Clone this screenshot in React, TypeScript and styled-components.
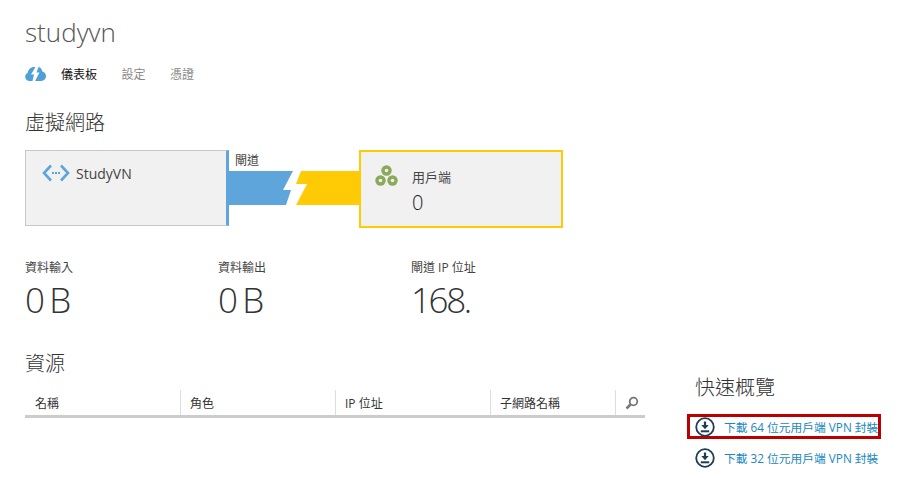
import React from "react";
import styled, { createGlobalStyle } from "styled-components";

const FONT = `"Open Sans", "Noto Sans CJK TC", sans-serif`;

const GlobalStyle = createGlobalStyle`
  html, body {
    margin: 0;
    padding: 0;
    background: #fff;
  }
  body {
    font-family: ${FONT};
    color: #333;
  }
`;

const Page = styled.div`
  width: 922px;
  height: 478px;
  padding: 16px 0 0 25px;
  box-sizing: border-box;
  overflow: hidden;
`;

const Title = styled.h1`
  margin: 0;
  font-size: 26px;
  font-weight: 300;
  line-height: 32px;
  color: #555;
`;

const Nav = styled.nav`
  display: flex;
  align-items: center;
  margin: 10px 0 19px;
  height: 32px;
`;

const NavIcon = styled.svg`
  width: 21px;
  height: 14px;
  margin-right: 15px;
`;

const NavItem = styled.a<{ $active?: boolean }>`
  font-size: 12px;
  margin-right: 24.5px;
  color: ${(p) => (p.$active ? "#111" : "#888")};
`;

const SectionTitle = styled.h2`
  margin: 0;
  font-size: 20px;
  font-weight: 300;
  line-height: 28px;
  color: #333;
`;

const Diagram = styled.div`
  display: flex;
  align-items: flex-start;
  margin-top: 13px;
`;

const NetworkBox = styled.div`
  box-sizing: border-box;
  width: 204px;
  height: 76px;
  background: #f1f1f1;
  border: 1px solid #c8c8c8;
  border-right: 3px solid #5ea5db;
  padding: 13px 16px;
  display: flex;
  align-items: flex-start;
  gap: 6px;
  font-size: 14px;
  color: #444;
`;

const Connector = styled.div`
  width: 130px;
`;

const ConnectorLabel = styled.div`
  font-size: 12px;
  line-height: 21px;
  padding-left: 6px;
  color: #444;
`;

const ConnectorArt = styled.svg`
  display: block;
  width: 130px;
  height: 34px;
`;

const ClientBox = styled.div`
  box-sizing: border-box;
  width: 204px;
  height: 78px;
  background: #f1f1f1;
  border: 2px solid #ffcb05;
  padding: 13px 14px;
  display: flex;
  gap: 14px;
`;

const ClientIcon = styled.svg`
  flex: none;
  width: 23px;
  height: 21px;
`;

const ClientText = styled.div`
  padding-top: 2px;
  font-size: 13px;
  line-height: 20px;
  color: #444;
`;

const ClientCount = styled.div`
  margin-top: 3px;
  font-size: 20px;
  font-weight: 300;
  line-height: 26px;
  color: #222;
`;

const Stats = styled.div`
  display: flex;
  margin-top: 32px;
`;

const Stat = styled.div<{ $width: number }>`
  width: ${(p) => p.$width}px;
`;

const StatLabel = styled.div`
  font-size: 12px;
  line-height: 16px;
  color: #444;
`;

const StatValue = styled.div`
  margin-top: 3px;
  font-size: 35px;
  font-weight: 300;
  line-height: 42px;
  letter-spacing: -2.4px;
  color: #333;
`;

const Bottom = styled.div`
  display: flex;
  align-items: flex-start;
  margin-top: 29px;
`;

const Resources = styled.section`
  width: 620px;
  margin-right: 50px;
`;

const TableHead = styled.div`
  display: grid;
  grid-template-columns: 155px 155px 155px 125px 30px;
  margin-top: 12px;
  height: 25px;
  border-bottom: 3px solid #ccc;
`;

const HeadCell = styled.div<{ $first?: boolean }>`
  display: flex;
  align-items: center;
  padding-left: ${(p) => (p.$first ? 10 : 9)}px;
  font-size: 12px;
  color: #333;
  border-left: ${(p) => (p.$first ? "none" : "1px solid #ddd")};
`;

const QuickGlance = styled.section`
  padding-top: 24px;
`;

const QuickTitle = styled(SectionTitle)`
  margin-bottom: 12px;
`;

const DownloadLink = styled.a<{ $highlight?: boolean }>`
  display: flex;
  align-items: center;
  gap: 9px;
  box-sizing: border-box;
  width: 194px;
  height: 25px;
  margin-left: -8px;
  padding-left: 5px;
  margin-bottom: 6px;
  white-space: nowrap;
  font-size: 11.75px;
  color: #1a87c0;
  border: 3px solid ${(p) => (p.$highlight ? "#bb0000" : "transparent")};
`;

const DownloadIcon = styled.svg`
  flex: none;
  width: 20px;
  height: 20px;
`;

const DownloadGlyph = () => (
  <DownloadIcon viewBox="0 0 20 20" fill="none">
    <circle cx="10" cy="10" r="8.800" stroke="#1e3c55" strokeWidth="1.800" />
    <path d="M10 4.500v5" stroke="#1e3c55" strokeWidth="2.200" />
    <path d="M6.300 8 10 12.200 13.700 8z" fill="#1e3c55" />
    <path d="M5.800 14.300h8.400" stroke="#1e3c55" strokeWidth="2" />
  </DownloadIcon>
);

export default function App() {
  return (
    <Page>
      <GlobalStyle />
      <Title>studyvn</Title>
      <Nav>
        <NavIcon viewBox="0 0 21 14">
          <path
            d="M4.500 14A4.300 4.300 0 0 1 2.700 5.800C3.300 2.400 6 0 9 0c1 0 1.600.2 2.300.5 1-.5 2-.5 3-.2 1.500.6 2.600 2 2.800 4 2.200.6 3.900 2.500 3.900 4.800 0 2.700-2 4.900-4.600 4.900z"
            fill="#4f9fd8"
          />
          <path d="M10.500 0 6 7.500h3L7.500 14h2.600L14.500 5.500h-3L13.500 0z" fill="#fff" />
        </NavIcon>
        <NavItem $active>儀表板</NavItem>
        <NavItem>設定</NavItem>
        <NavItem>憑證</NavItem>
      </Nav>
      <SectionTitle>虛擬網路</SectionTitle>
      <Diagram>
        <NetworkBox>
          <svg width="28" height="18" viewBox="0 0 28 18" fill="none" stroke="#5ea5db">
            <path d="M9 1.500 2 9l7 7.500M19 1.500 26 9l-7 7.500" strokeWidth="2.600" />
            <path d="M10 9h8" strokeWidth="2.200" strokeDasharray="2 1" />
          </svg>
          <span>StudyVN</span>
        </NetworkBox>
        <Connector>
          <ConnectorLabel>閘道</ConnectorLabel>
          <ConnectorArt viewBox="0 0 130 34">
            <path d="M0 0h64L54 19h8l-5 15H0z" fill="#5ea5db" />
            <path d="M72 0h58v34H67l11-21H67z" fill="#ffcb05" />
          </ConnectorArt>
        </Connector>
        <ClientBox>
          <ClientIcon viewBox="0 0 23 21">
            <g fill="#8aaa5a">
              <circle cx="11.500" cy="5.500" r="5.200" />
              <circle cx="5.500" cy="15.500" r="5.200" />
              <circle cx="17.500" cy="15.500" r="5.200" />
            </g>
            <g fill="#f1f1f1">
              <circle cx="11.500" cy="5.500" r="1.800" />
              <circle cx="5.500" cy="15.500" r="1.800" />
              <circle cx="17.500" cy="15.500" r="1.800" />
            </g>
          </ClientIcon>
          <ClientText>
            用戶端
            <ClientCount>0</ClientCount>
          </ClientText>
        </ClientBox>
      </Diagram>
      <Stats>
        <Stat $width={193}>
          <StatLabel>資料輸入</StatLabel>
          <StatValue>0 B</StatValue>
        </Stat>
        <Stat $width={193}>
          <StatLabel>資料輸出</StatLabel>
          <StatValue>0 B</StatValue>
        </Stat>
        <Stat $width={200}>
          <StatLabel>閘道 IP 位址</StatLabel>
          <StatValue>168.</StatValue>
        </Stat>
      </Stats>
      <Bottom>
        <Resources>
          <SectionTitle>資源</SectionTitle>
          <TableHead>
            <HeadCell $first>名稱</HeadCell>
            <HeadCell>角色</HeadCell>
            <HeadCell>IP 位址</HeadCell>
            <HeadCell>子網路名稱</HeadCell>
            <HeadCell>
              <svg width="14" height="14" viewBox="0 0 14 14" fill="none" stroke="#777">
                <circle cx="8.500" cy="5.500" r="3.800" strokeWidth="1.800" />
                <path d="M5.500 8.500 1.500 12.500" strokeWidth="2.500" />
              </svg>
            </HeadCell>
          </TableHead>
        </Resources>
        <QuickGlance>
          <QuickTitle>快速概覽</QuickTitle>
          <DownloadLink $highlight>
            <DownloadGlyph />
            下載 64 位元用戶端 VPN 封裝
          </DownloadLink>
          <DownloadLink>
            <DownloadGlyph />
            下載 32 位元用戶端 VPN 封裝
          </DownloadLink>
        </QuickGlance>
      </Bottom>
    </Page>
  );
}
